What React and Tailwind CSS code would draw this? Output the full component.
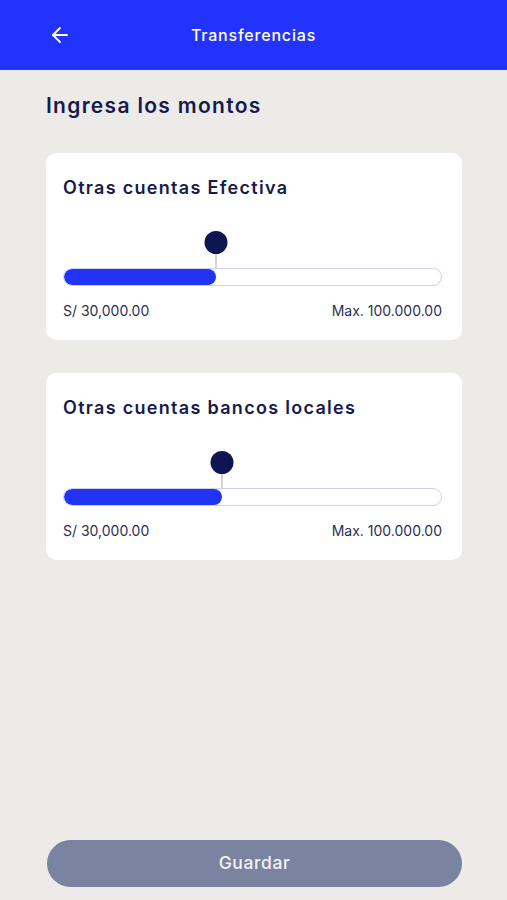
import { ArrowLeft } from 'lucide-react'

const LIMITS = [
  { id: 'efectiva', title: 'Otras cuentas Efectiva', pct: 40.3 },
  { id: 'locales', title: 'Otras cuentas bancos locales', pct: 42 },
]

function LimitCard({ title, pct }) {
  return (
    <div className="bg-white rounded-[10px] pl-[17px] pr-[20px] pt-[24px] pb-[20px]">
      <h3 className="text-[18px] font-semibold text-[#171a4d] leading-[22px] tracking-[1.3px]">{title}</h3>

      {/* slider */}
      <div className="mt-[32px] flex flex-col">
        <div className="relative h-[37px]">
          <div
            className="absolute top-0 flex flex-col items-center -translate-x-1/2"
            style={{ left: `${pct}%` }}
          >
            <div className="w-[23px] h-[23px] rounded-full bg-[#0d1650]" />
            <div className="w-px h-[14px] bg-[#a3a7b8]" />
          </div>
        </div>
        <div className="h-[18px] rounded-full border border-[#cfd0f0] bg-white overflow-hidden">
          <div className="h-full rounded-full bg-[#2133f5]" style={{ width: `${pct}%` }} />
        </div>
      </div>

      <div className="mt-[16px] flex items-center justify-between text-[14px] text-[#2c2f52] leading-[18px]">
        <span>S/ 30,000.00</span>
        <span>Max. 100.000.00</span>
      </div>
    </div>
  )
}

export default function App() {
  return (
    <div
      className="w-[507px] h-[900px] bg-[#ecebe7] flex flex-col"
      style={{ fontFamily: 'Inter, "Noto Sans", sans-serif' }}
    >
      <header className="h-[70px] bg-[#2233fb] flex items-center px-[48px] relative shrink-0">
        <ArrowLeft size={24} strokeWidth={1.8} className="text-white" />
        <span className="absolute left-1/2 -translate-x-1/2 text-white text-[16px] font-medium tracking-[0.8px]">Transferencias</span>
      </header>

      <main className="flex-1 flex flex-col px-[46px]">
        <h2 className="mt-[23px] text-[21px] font-semibold text-[#171a4d] leading-[26px] tracking-[1.3px]">Ingresa los montos</h2>

        <div className="mt-[34px] flex flex-col gap-[33px] w-[416px]">
          {LIMITS.map(l => (
            <LimitCard key={l.id} title={l.title} pct={l.pct} />
          ))}
        </div>

        <button className="mt-auto mb-[13px] ml-px w-[415px] h-[47px] rounded-full bg-[#7a839f] text-white/90 text-[17.5px] font-medium tracking-[0.6px]">
          Guardar
        </button>
      </main>
    </div>
  )
}
